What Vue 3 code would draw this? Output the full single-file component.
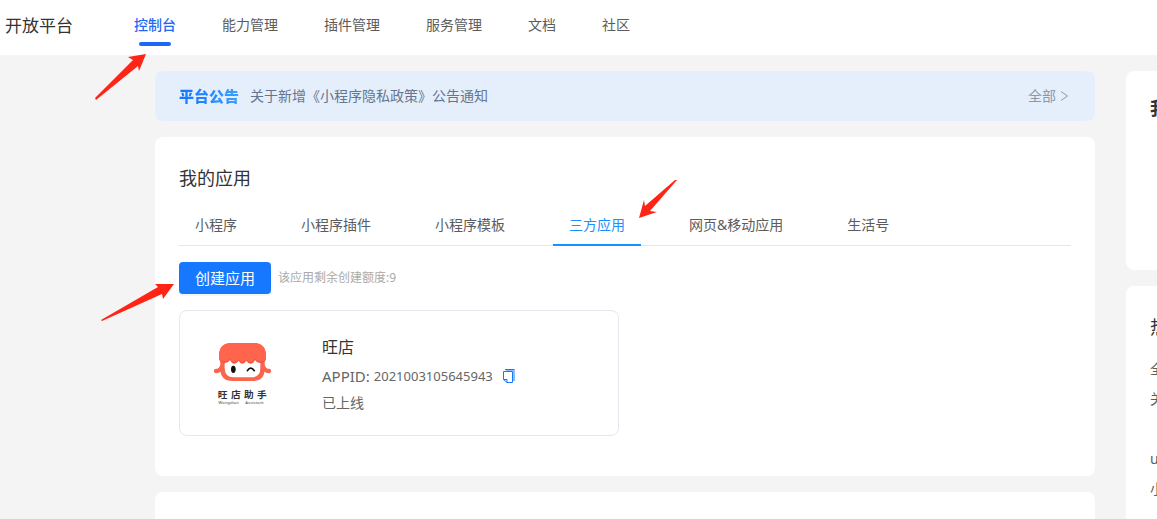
<script setup>
import { ref } from 'vue'

const navItems = ['控制台', '能力管理', '插件管理', '服务管理', '文档', '社区']
const tabs = ['小程序', '小程序插件', '小程序模板', '三方应用', '网页&移动应用', '生活号']
const activeNav = ref(0)
const activeTab = ref(3)
const arrows = [
  '146,54 128,57 133,60 95,98 96,100 138,66 139,71',
  '639,218 644,200 645,206 675,180 677,180 650,211 657,212',
  '174,284 155,284 158,287 101,320 102,321 162,294 163,299',
]
</script>

<template>
  <div class="page">
    <header class="topbar">
      <span class="brand">开放平台</span>
      <nav class="nav">
        <a
          v-for="(item, i) in navItems"
          :key="item"
          href="#"
          :class="{ active: i === activeNav }"
          @click.prevent="activeNav = i"
        >{{ item }}</a>
      </nav>
    </header>

    <div class="body">
      <main class="main">
        <section class="notice">
          <strong class="notice-title">平台公告</strong>
          <a class="notice-text" href="#">关于新增《小程序隐私政策》公告通知</a>
          <a class="more" href="#">
            全部
            <svg width="9" height="12" viewBox="0 0 9 12" aria-hidden="true">
              <path d="M1 1.5 7.5 6 1 10.5" fill="none" stroke="currentColor" />
            </svg>
          </a>
        </section>

        <section class="apps">
          <h2>我的应用</h2>
          <div class="tabs" role="tablist">
            <button
              v-for="(tab, i) in tabs"
              :key="tab"
              type="button"
              role="tab"
              :aria-selected="i === activeTab"
              :class="{ active: i === activeTab }"
              @click="activeTab = i"
            >{{ tab }}</button>
          </div>
          <div class="actions">
            <button class="create" type="button">创建应用</button>
            <span class="quota">该应用剩余创建额度:9</span>
          </div>
          <article class="app">
            <svg class="logo" width="60" height="64" viewBox="70 66 180 192" role="img" aria-label="旺店助手">
              <path d="M98 138Q92 153 79 153M219 138Q225 153 238 153" fill="none" stroke="#fb654d" stroke-width="13" stroke-linecap="round" />
              <path d="M92 110H225V147Q225 183 188 183H129Q92 183 92 147Z" fill="#fb654d" />
              <path d="M105 112H212V144Q212 172 185 172H132Q105 172 105 144Z" fill="#fff" />
              <path d="M88 118V108Q88 69 127 69H190Q229 69 229 108V118Q226 129 214 129Q201 129 196 120Q191 131 183 131Q175 131 170 122Q165 131 158 131Q151 131 147 122Q141 131 134 131Q126 131 121 120Q116 129 104 129Q91 129 88 118Z" fill="#f05844" />
              <path d="M88 113V108Q88 69 127 69H190Q229 69 229 108V113Q226 124 214 124Q201 124 196 115Q191 126 183 126Q175 126 170 117Q165 126 158 126Q151 126 147 117Q141 126 134 126Q126 126 121 115Q116 124 104 124Q91 124 88 113Z" fill="#ff654c" />
              <ellipse cx="131" cy="148" rx="7" ry="11" fill="#111" />
              <path d="M173 152Q183 137 194 152" fill="none" stroke="#111" stroke-width="5" stroke-linecap="round" />
              <text class="logo-name" x="84 124 163 202" y="235">旺店助手</text>
              <text class="logo-sub" x="86" y="252">Wangdian</text>
              <text class="logo-sub" x="167" y="252">Assistant</text>
            </svg>
            <div class="info">
              <h3>旺店</h3>
              <p class="appid">
                <span class="key">APPID:</span>
                <span>2021003105645943</span>
                <button class="copy" type="button" aria-label="复制">
                  <svg width="12" height="14" viewBox="0 0 12 14">
                    <path d="M3 0h9v12h-2V2H3z" fill="#8dbbff" />
                    <path d="M2 .5h9" fill="none" stroke="#1677ff" />
                    <path d="M.5 2.500h9v11H4L.5 10.500zM.5 10.500H4v3" fill="none" stroke="#1677ff" />
                  </svg>
                </button>
              </p>
              <p class="status">已上线</p>
            </div>
          </article>
        </section>

        <section class="next"></section>
      </main>

      <aside class="side">
        <section class="side-card account"><h2>我的</h2></section>
        <section class="side-card hot">
          <h2>热门</h2>
          <a href="#">全部</a>
          <a href="#">关于</a>
          <a class="group" href="#">uni</a>
          <a href="#">小程序</a>
        </section>
      </aside>
    </div>

    <svg class="arrows" aria-hidden="true">
      <polygon v-for="points in arrows" :key="points" :points="points" fill="#ff2416" />
    </svg>
  </div>
</template>

<style>
body {
  margin: 0;
}
</style>

<style scoped>
.page {
  position: relative;
  display: flex;
  flex-direction: column;
  min-height: 100vh;
  overflow: hidden;
  background: #f4f4f4;
  color: #333;
  font-family: "Noto Sans", "Noto Sans CJK SC", sans-serif;
  font-size: 14px;
  line-height: 20px;
}
h2,
h3,
p {
  margin: 0;
  font-weight: 400;
}
a {
  color: inherit;
  text-decoration: none;
}
button {
  padding: 0;
  border: 0;
  background: none;
  color: inherit;
  font: inherit;
  cursor: pointer;
}
.topbar {
  display: flex;
  align-items: center;
  gap: 61px;
  height: 55px;
  padding-left: 5px;
  background: #fff;
}
.brand {
  padding-bottom: 4px;
  font-size: 17px;
}
.nav {
  display: flex;
  gap: 46px;
  color: #5c5c5c;
}
.nav a {
  position: relative;
  padding-bottom: 6px;
}
.nav .active {
  color: #1f67f5;
  font-weight: 500;
}
.nav .active::after {
  content: "";
  position: absolute;
  bottom: -5px;
  left: 5px;
  right: 5px;
  height: 4px;
  border-radius: 2px;
  background: #1f67f5;
}
.body {
  flex: 1;
  display: grid;
  grid-template-columns: minmax(0, 1fr) 31px;
  gap: 31px;
  padding: 16px 0 0 155px;
}
.main,
.side {
  display: flex;
  flex-direction: column;
  gap: 16px;
}
.notice {
  display: flex;
  align-items: center;
  height: 50px;
  padding: 0 26px 0 24px;
  border-radius: 8px;
  background: #e5effc;
}
.notice-title {
  margin-right: 11px;
  background: linear-gradient(90deg, #1473ff, #3ba0ff);
  background-clip: text;
  color: transparent;
  font-size: 15px;
  font-weight: 900;
}
.notice-text {
  color: #66758f;
}
.more {
  display: flex;
  align-items: center;
  gap: 4px;
  margin-left: auto;
  color: #8c97a8;
}
.apps {
  padding: 28px 24px 40px;
  border-radius: 8px;
  background: #fff;
}
.apps h2 {
  font-size: 18px;
  line-height: 26px;
}
.tabs {
  display: flex;
  gap: 32px;
  margin-top: 13px;
  border-bottom: 1px solid #e6e6e6;
  color: #5c5c5c;
}
.tabs button {
  margin-bottom: -1px;
  padding: 11px 16px 9px;
  border-bottom: 2px solid transparent;
}
.tabs .active {
  border-color: #1890ff;
  color: #1890ff;
}
.actions {
  display: flex;
  align-items: center;
  gap: 7px;
  margin: 16px 0;
}
.create {
  height: 32px;
  padding: 0 16px;
  border-radius: 4px;
  background: #1677ff;
  box-shadow: 0 2px 0 #f5f5f5;
  color: #fff;
  font-size: 15px;
}
.quota {
  color: #aaa;
  font-size: 12px;
}
.app {
  box-sizing: border-box;
  display: flex;
  gap: 49px;
  max-width: 440px;
  padding: 24px 33px 22px;
  border: 1px solid #e4e7ee;
  border-radius: 8px;
}
.logo {
  margin-top: 7px;
}
.logo-name {
  font-size: 29px;
  font-weight: 700;
  fill: #333;
}
.logo-sub {
  font-size: 13px;
  fill: #555;
}
.info {
  color: #666;
}
.info h3 {
  color: #333;
  font-size: 16px;
  line-height: 24px;
}
.appid {
  display: flex;
  align-items: center;
  gap: 4px;
  height: 20px;
  margin: 7px 0;
  font-size: 13px;
}
.key {
  font-size: 15px;
}
.copy {
  display: flex;
  margin-left: 6px;
}
.next {
  flex: 1;
  min-height: 27px;
  border-radius: 8px 8px 0 0;
  background: #fff;
}
.side {
  overflow: hidden;
  white-space: nowrap;
}
.side-card {
  padding-left: 24px;
  border-radius: 8px 0 0 8px;
  background: #fff;
}
.account {
  height: 175px;
  padding-top: 24px;
}
.account h2 {
  font-size: 18px;
  font-weight: 700;
  line-height: 26px;
}
.hot {
  flex: 1;
  display: flex;
  flex-direction: column;
  gap: 10px;
  padding-top: 28px;
  border-radius: 8px 0 0 0;
  color: #5c5c5c;
}
.hot h2 {
  margin-bottom: 9px;
  color: #333;
  font-size: 18px;
  line-height: 26px;
}
.hot .group {
  margin-top: 30px;
}
.arrows {
  position: absolute;
  inset: 0;
  width: 100%;
  height: 100%;
  pointer-events: none;
}
</style>
